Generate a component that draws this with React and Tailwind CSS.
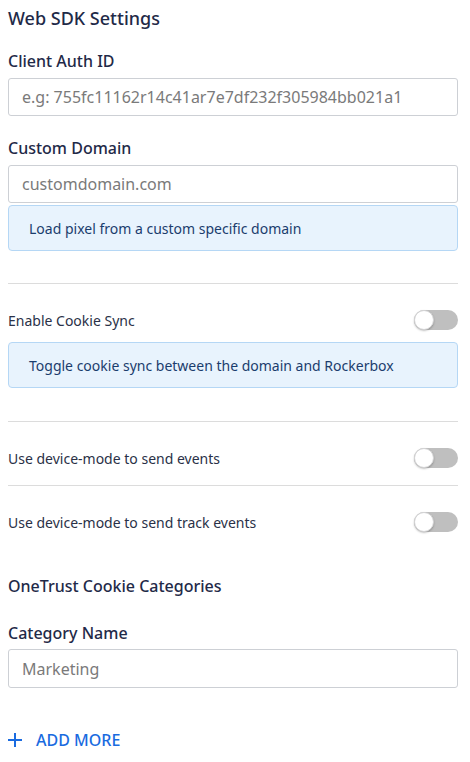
import React, { useState } from 'react';

const Toggle = ({ on, onChange }) => (
  <button
    onClick={onChange}
    className={`relative w-[44px] h-[20px] rounded-full shrink-0 ${on ? 'bg-[#2185d0]' : 'bg-[#bfbfbf]'}`}
  >
    <span
      className={`absolute top-0 w-[20px] h-[20px] rounded-full bg-white border border-[#d4d4d5] shadow-[0_1px_2px_rgba(0,0,0,0.25)] ${on ? 'left-[24px]' : 'left-0'}`}
    ></span>
  </button>
);

const Info = ({ children, className = '' }) => (
  <div className={`h-[46px] flex items-center px-[20px] bg-[#e8f3fd] border border-[#b5d7f5] rounded-[4px] text-[14px] text-[#1b3d6d] ${className}`}>
    {children}
  </div>
);

const Input = ({ placeholder, className = '' }) => (
  <input
    placeholder={placeholder}
    className={`block w-full h-[38px] px-[13px] border border-[#cdd0d5] rounded-[3px] text-[16px] text-[#333] placeholder:text-[#7a7a7a] outline-none ${className}`}
  />
);

export default function App() {
  const [toggles, setToggles] = useState({ cookie: false, device: false, track: false });
  const flip = (k) => setToggles((p) => ({ ...p, [k]: !p[k] }));

  return (
    <div className="w-[450px] ml-2 font-['Noto_Sans',sans-serif] text-[#1f2a48] bg-white">
      <h2 className="text-[18px] font-medium leading-6 pt-[6px]">Web SDK Settings</h2>

      <label className="block text-[16px] font-medium leading-6 mt-[19px]">Client Auth ID</label>
      <Input placeholder="e.g: 755fc11162r14c41ar7e7df232f305984bb021a1" className="mt-[5px]" />

      <label className="block text-[16px] font-medium leading-6 mt-[20px]">Custom Domain</label>
      <Input placeholder="customdomain.com" className="mt-[5px]" />
      <Info className="mt-[2px]">Load pixel from a custom specific domain</Info>

      <div className="border-t border-[#dcdcdc] mt-[32px]"></div>

      <div className="flex items-center justify-between h-[20px] mt-[26px]">
        <span className="text-[14px] text-[#2a3147]">Enable Cookie Sync</span>
        <Toggle on={toggles.cookie} onChange={() => flip('cookie')} />
      </div>
      <Info className="mt-[12px]">Toggle cookie sync between the domain and Rockerbox</Info>

      <div className="border-t border-[#dcdcdc] mt-[33px]"></div>

      <div className="flex items-center justify-between h-[20px] mt-[26px]">
        <span className="text-[14px] text-[#2a3147]">Use device-mode to send events</span>
        <Toggle on={toggles.device} onChange={() => flip('device')} />
      </div>

      <div className="border-t border-[#dcdcdc] mt-[17px]"></div>

      <div className="flex items-center justify-between h-[20px] mt-[26px]">
        <span className="text-[14px] text-[#2a3147]">Use device-mode to send track events</span>
        <Toggle on={toggles.track} onChange={() => flip('track')} />
      </div>

      <h3 className="text-[16px] font-medium leading-6 mt-[42px]">OneTrust Cookie Categories</h3>

      <label className="block text-[16px] font-medium leading-6 mt-[23px]">Category Name</label>
      <Input placeholder="Marketing" className="mt-[4px] h-[39px]" />

      <button className="flex items-center gap-[14px] mt-[40px] text-[#1a6be0] text-[16px] font-medium leading-6">
        <svg width="14" height="14" viewBox="0 0 14 14" fill="none" stroke="currentColor" strokeWidth="2">
          <path d="M7 0v14M0 7h14" />
        </svg>
        ADD MORE
      </button>
    </div>
  );
}
